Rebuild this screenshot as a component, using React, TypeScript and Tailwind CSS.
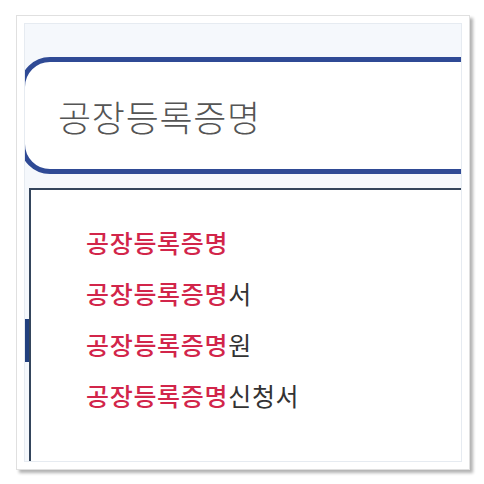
const suggestions = ['', '서', '원', '신청서'];

export default function App() {
  return (
    <div className="w-[484px] h-[484px] bg-white pt-[15px] pl-[16px] font-['Noto_Sans_CJK_KR',sans-serif]">
      {/* photo frame */}
      <div className="w-[454px] h-[455px] border border-[#e0e0e0] bg-white p-[7px] shadow-[3px_3px_3px_rgba(0,0,0,0.3)]">
        <div className="w-full h-full border border-[#e6ebf1] bg-[#f5f8fc] overflow-hidden flex flex-col">
          <div className="h-[33px] shrink-0" />

          {/* search box */}
          <div className="h-[117px] shrink-0 -ml-[5px] -mr-[40px] border-[5px] border-[#2f4a95] rounded-l-[30px] bg-white flex items-center pl-[33px]">
            <span className="text-[36px] leading-none font-light text-[#555] tracking-[0.7px]">공장등록증명</span>
          </div>

          <div className="h-[14px] shrink-0" />

          {/* suggestions */}
          <div className="flex-1 flex">
            <div className="w-[4px] shrink-0 pt-[131px]">
              <div className="h-[43px] bg-[#22407e]" />
            </div>
            <div className="flex-1 -mr-[20px] border-t-2 border-l-2 border-[#34455c] bg-white pt-[27px] pl-[55px]">
              {suggestions.map((s, i) => (
                <div key={i} className="h-[51px] flex items-center text-[25px] leading-none tracking-[0.7px]">
                  <span className="font-medium text-[#d2254a]">공장등록증명</span>
                  <span className="text-[#333]">{s}</span>
                </div>
              ))}
            </div>
          </div>
        </div>
      </div>
    </div>
  );
}
